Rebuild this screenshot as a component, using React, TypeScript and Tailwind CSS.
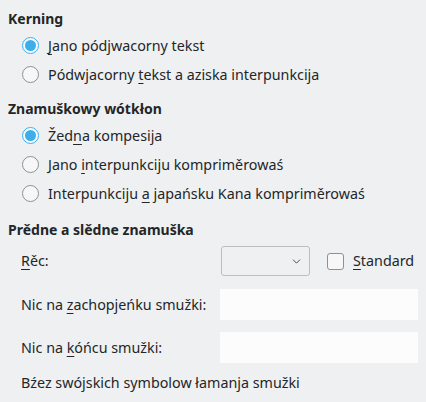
import { ChevronDown } from "lucide-react";

type RadioProps = { checked?: boolean; children: React.ReactNode };

function Radio({ checked, children }: RadioProps) {
  return (
    <div className="flex h-[29px] items-center pl-[22px]">
      {checked ? (
        <span className="flex h-[17px] w-[17px] items-center justify-center rounded-full border border-[#3daee9] bg-[#fcfcfc]">
          <span className="h-[11px] w-[11px] rounded-full bg-[#3daee9]" />
        </span>
      ) : (
        <span className="h-[17px] w-[17px] rounded-full border border-[#8e9093] bg-[#f7f7f8]" />
      )}
      <span className="ml-[9px]">{children}</span>
    </div>
  );
}

const u = "underline underline-offset-[3px] decoration-1";
const heading = "flex h-[24px] items-center pl-[8px] text-[14px] font-bold";

export default function App() {
  return (
    <div
      className="h-[402px] w-[426px] overflow-hidden bg-[#eff0f1] text-[14.3px] text-[#232629]"
      style={{ fontFamily: '"Noto Sans", "Open Sans", sans-serif' }}
    >
      <div className="pt-[6px]">
        <h2 className={heading}>Kerning</h2>
        <div className="mt-[1px]">
          <Radio checked>
            <span className={u}>J</span>ano pódjwacorny tekst
          </Radio>
          <Radio>
            Pódwjacorny <span className={u}>t</span>ekst a aziska interpunkcija
          </Radio>
        </div>

        <h2 className={"mt-[7px] " + heading}>Znamuškowy wótkłon</h2>
        <div className="mt-[1px]">
          <Radio checked>
            Žed<span className={u}>n</span>a kompesija
          </Radio>
          <Radio>
            Jano <span className={u}>i</span>nterpunkciju kompriměrowaś
          </Radio>
          <Radio>
            Interpunkciju <span className={u}>a</span> japańsku Kana kompriměrowaś
          </Radio>
        </div>

        <h2 className={"mt-[9px] " + heading}>Prědne a slědne znamuška</h2>

        <div className="mt-[5px] flex h-[30px] items-center pl-[21px]">
          <span className="w-[200px]">
            <span className={u}>R</span>ěc:
          </span>
          <div className="flex h-[30px] w-[89px] items-center justify-end rounded-[3px] border border-[#bcbebf] bg-[#eff0f1] pr-[6px]">
            <ChevronDown size={13} strokeWidth={1.5} className="text-[#232629]" />
          </div>
          <span className="ml-[17px] h-[17px] w-[17px] rounded-[3px] border border-[#8e9093] bg-[#f7f7f8]" />
          <span className="ml-[9px]">
            <span className={u}>S</span>tandard
          </span>
        </div>

        <div className="mt-[13px] flex h-[31px] items-center pl-[21px]">
          <span className="w-[199px]">
            Nic na <span className={u}>z</span>achopjeńku smužki:
          </span>
          <div className="h-[31px] w-[198px] bg-[#fcfcfc]" />
        </div>

        <div className="mt-[12px] flex h-[31px] items-center pl-[21px]">
          <span className="w-[199px]">
            Nic na <span className={u}>k</span>óńcu smužki:
          </span>
          <div className="h-[31px] w-[198px] bg-[#fcfcfc]" />
        </div>

        <div className="mt-[10px] flex h-[20px] items-center pl-[21px]">
          Bźez swójskich symbolow łamanja smužki
        </div>
      </div>
    </div>
  );
}
